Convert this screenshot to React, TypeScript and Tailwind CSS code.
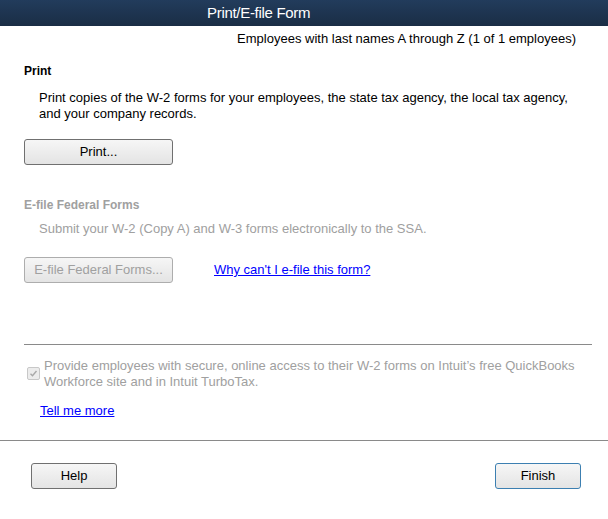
import React from "react";

function Btn({ label, disabled, primary, className }: { label: string; disabled?: boolean; primary?: boolean; className?: string }) {
  return (
    <div
      className={
        "flex h-[26px] items-center justify-center rounded-[3px] border bg-gradient-to-b from-[#f6f6f6] to-[#e4e4e4] text-[13px] " +
        (disabled
          ? "border-[#adadad] text-[#a0a0a0] "
          : primary
          ? "border-[#3c7fb1] text-black "
          : "border-[#707070] text-black ") +
        (className || "")
      }
    >
      {label}
    </div>
  );
}

export default function App() {
  return (
    <div className="h-[519px] w-[608px] overflow-hidden bg-white font-['Liberation_Sans',Arial,sans-serif] text-[13px] leading-[16px] text-black">
      <div className="flex h-[26px] items-center bg-gradient-to-b from-[#223c5c] to-[#1a2d45] pl-[207px] text-[15px] tracking-[-0.3px] text-white">
        Print/E-file Form
      </div>
      <div className="mt-[5px] pr-[32px] text-right">Employees with last names A through Z (1 of 1 employees)</div>

      <div className="mt-[16px] pl-[24px] text-[12px] font-bold">Print</div>
      <div className="mt-[11px] pl-[39px] pr-[20px]">
        Print copies of the W-2 forms for your employees, the state tax agency, the local tax agency,
        <br />
        and your company records.
      </div>
      <div className="mt-[17px] pl-[24px]">
        <Btn label="Print..." className="w-[149px]" />
      </div>

      <div className="mt-[32px] pl-[24px] text-[12px] font-bold text-[#a0a0a0]">E-file Federal Forms</div>
      <div className="mt-[8px] pl-[39px] text-[#a0a0a0]">Submit your W-2 (Copy A) and W-3 forms electronically to the SSA.</div>
      <div className="mt-[20px] flex items-center pl-[24px]">
        <Btn label="E-file Federal Forms..." disabled className="w-[149px]" />
        <span className="ml-[41px] text-[#0000ff] underline">Why can't I e-file this form?</span>
      </div>

      <div className="ml-[24px] mr-[16px] mt-[61px] h-px bg-[#8a8a8a]" />

      <div className="mt-[13px] flex pl-[27px] pr-[20px] text-[#a0a0a0]">
        <div className="mt-[9px] flex h-[13px] w-[13px] shrink-0 items-center justify-center rounded-[2px] border border-[#c8c8c8] bg-[#ececec]">
          <svg width="9" height="9" viewBox="0 0 9 9">
            <path d="M1.5 4.8 L3.5 6.8 L7.5 2" stroke="#a8a8a8" strokeWidth="1.4" fill="none" />
          </svg>
        </div>
        <div className="ml-[4px]">
          Provide employees with secure, online access to their W-2 forms on Intuit’s free QuickBooks
          <br />
          Workforce site and in Intuit TurboTax.
        </div>
      </div>
      <div className="mt-[13px] pl-[40px]">
        <span className="text-[#0000ff] underline">Tell me more</span>
      </div>

      <div className="mt-[21px] h-px bg-[#8a8a8a]" />

      <div className="mt-[22px] flex justify-between pl-[31px] pr-[27px]">
        <Btn label="Help" className="w-[86px]" />
        <Btn label="Finish" primary className="w-[86px]" />
      </div>
    </div>
  );
}
